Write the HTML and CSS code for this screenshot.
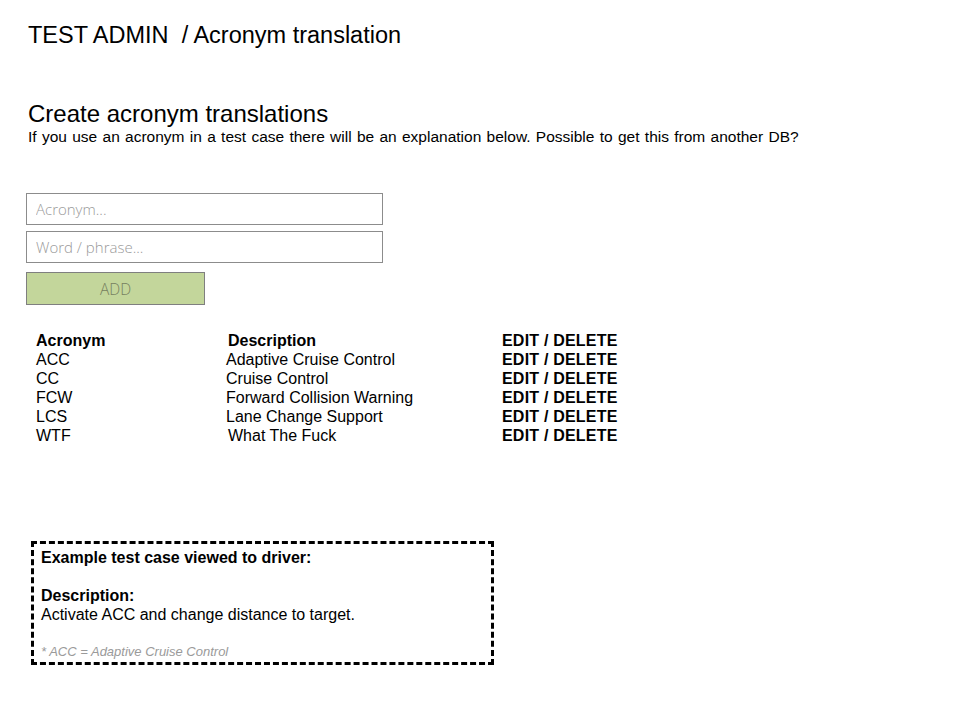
FILE: index.html
```html
<!DOCTYPE html>
<html>
<head>
<meta charset="utf-8">
<link rel="stylesheet" href="styles.css">
</head>
<body>
<div class="page">
  <h1 class="title">TEST ADMIN &nbsp;/ Acronym translation</h1>
  <section class="intro">
    <h2 class="heading">Create acronym translations</h2>
    <p class="lead">If you use an acronym in a test case there will be an explanation below. Possible to get this from another DB?</p>
  </section>
  <form class="form">
    <input class="field" type="text" placeholder="Acronym...">
    <input class="field" type="text" placeholder="Word / phrase...">
    <button class="add" type="button">ADD</button>
  </form>
  <div class="table">
    <div class="row head"><span class="c1">Acronym</span><span class="c2 shift">Description</span><span class="c3">EDIT / DELETE</span></div>
    <div class="row"><span class="c1">ACC</span><span class="c2">Adaptive Cruise Control</span><span class="c3">EDIT / DELETE</span></div>
    <div class="row"><span class="c1">CC</span><span class="c2">Cruise Control</span><span class="c3">EDIT / DELETE</span></div>
    <div class="row"><span class="c1">FCW</span><span class="c2">Forward Collision Warning</span><span class="c3">EDIT / DELETE</span></div>
    <div class="row"><span class="c1">LCS</span><span class="c2">Lane Change Support</span><span class="c3">EDIT / DELETE</span></div>
    <div class="row"><span class="c1">WTF</span><span class="c2 shift">What The Fuck</span><span class="c3">EDIT / DELETE</span></div>
  </div>
  <div class="example">
    <p class="ex-title">Example test case viewed to driver:</p>
    <p class="ex-label">Description:</p>
    <p class="ex-text">Activate ACC and change distance to target.</p>
    <p class="ex-note">* ACC = Adaptive Cruise Control</p>
  </div>
</div>
</body>
</html>
```
FILE: styles.css
```css
html, body {
  margin: 0;
  padding: 0;
  background: #ffffff;
}
body {
  font-family: "Liberation Sans", Arial, sans-serif;
  color: #000;
}
.page {
  padding: 22px 0 0 28px;
  display: flex;
  flex-direction: column;
  align-items: flex-start;
}
.title {
  margin: 0;
  font-size: 23.5px;
  line-height: 27px;
  font-weight: normal;
}
.intro {
  margin-top: 51px;
}
.heading {
  margin: 0;
  font-size: 24px;
  line-height: 27px;
  font-weight: normal;
}
.lead {
  margin: 0;
  font-size: 15.5px;
  line-height: 19px;
  word-spacing: 1px;
}
.form {
  margin: 47px 0 0 -2px;
  display: flex;
  flex-direction: column;
  align-items: flex-start;
  gap: 6px;
}
.field {
  box-sizing: border-box;
  width: 357px;
  height: 32px;
  margin: 0;
  border: 1px solid #8c8c8c;
  padding: 0 9px;
  font-family: "Open Sans", "Noto Sans", sans-serif;
  font-weight: 300;
  font-size: 15px;
  background: #fff;
  outline: none;
}
.field::placeholder {
  color: #9a9a9a;
}
.add {
  box-sizing: border-box;
  margin-top: 3px;
  width: 179px;
  height: 33px;
  border: 1px solid #7f7f7f;
  background: #c3d69b;
  color: #76805f;
  font-family: "Open Sans", "Noto Sans", sans-serif;
  font-weight: 300;
  font-size: 15.5px;
  padding: 0;
}
.table {
  margin: 26px 0 0 8px;
  display: flex;
  flex-direction: column;
  font-size: 16px;
}
.row {
  display: grid;
  grid-template-columns: 190px 276px auto;
  line-height: 19px;
  height: 19px;
}
.row.head .c1, .row.head .c2 {
  font-weight: bold;
}
.shift {
  padding-left: 2px;
}
.c3 {
  font-weight: bold;
  letter-spacing: 0.2px;
}
.example {
  margin: 96px 0 0 3px;
  box-sizing: border-box;
  width: 463px;
  height: 124px;
  border: 3px dashed #000;
  padding: 4px 7px;
  font-size: 16px;
}
.example p {
  margin: 0;
  line-height: 19px;
}
.ex-title {
  font-weight: bold;
}
.ex-label {
  margin-top: 19px !important;
  font-weight: bold;
}
.ex-note {
  margin-top: 18px !important;
  font-style: italic;
  font-size: 13px;
  color: #9a9a9a;
}
```
